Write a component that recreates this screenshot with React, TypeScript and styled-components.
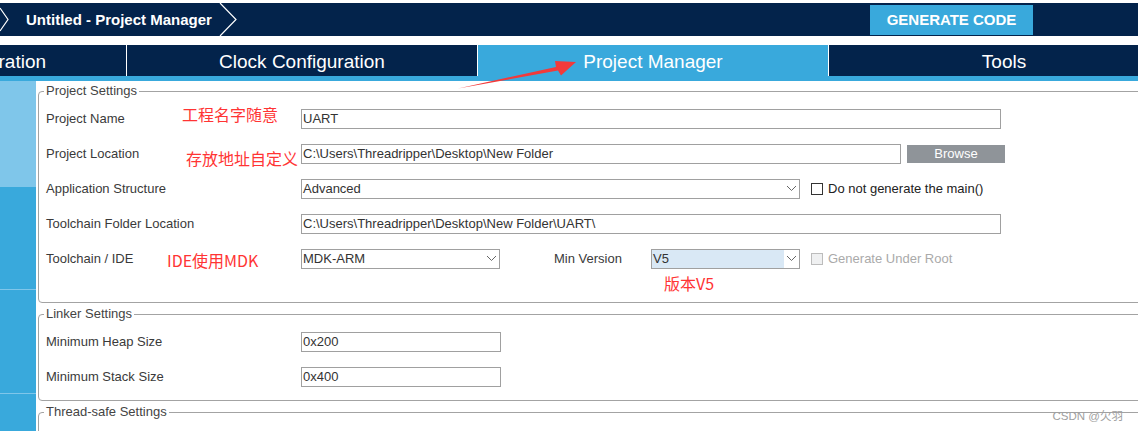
import * as React from "react";
import styled, { createGlobalStyle } from "styled-components";

const GlobalStyle = createGlobalStyle`
  body {
    margin: 0;
    background: #fff;
    overflow: hidden;
    font-family: "Liberation Sans", Arial, sans-serif;
  }
`;

const NAVY = "#03234b";
const BLUE = "#39a9dc";
const PALE = "#7fc6ea";

const Page = styled.div`
  position: relative;
  width: 1138px;
  height: 431px;
  padding-top: 3px;
  box-sizing: border-box;
  overflow: hidden;
  background: #fff;
`;

const TopBar = styled.div`
  height: 33px;
  background: ${NAVY};
  display: flex;
  align-items: center;
`;

const Crumb = styled.div`
  display: flex;
  align-items: center;
  height: 100%;
  color: #fff;
  font-weight: bold;
  font-size: 15px;
`;

const CrumbText = styled.span`
  padding: 0 7px 0 17px;
`;

const GenerateButton = styled.div`
  margin-left: auto;
  margin-right: 105px;
  width: 163px;
  height: 30px;
  background: ${BLUE};
  color: #fff;
  font-weight: bold;
  font-size: 15px;
  display: flex;
  align-items: center;
  justify-content: center;
`;

const TabRow = styled.div`
  margin-top: 9px;
  margin-left: -224px;
  height: 31px;
  display: flex;
  gap: 1px;
  background: #fff;
`;

const Tab = styled.div<{ $active?: boolean }>`
  flex: 0 0 350px;
  padding-top: 2px;
  box-sizing: border-box;
  background: ${(p) => (p.$active ? BLUE : NAVY)};
  color: #fff;
  font-size: 19px;
  display: flex;
  align-items: center;
  justify-content: center;
`;

const Strip = styled.div`
  height: 5px;
  background: ${BLUE};
`;

const Body = styled.div`
  display: flex;
`;

const Sidebar = styled.div`
  flex: 0 0 36px;
  display: flex;
  flex-direction: column;
  gap: 1px;
  background: ${PALE};
`;

const SideBlock = styled.div<{ $light?: boolean; $h: number }>`
  height: ${(p) => p.$h}px;
  background: ${(p) => (p.$light ? PALE : BLUE)};
`;

const Main = styled.div`
  flex: 1;
  padding: 3px 0 0 2px;
  overflow: hidden;
`;

const Group = styled.fieldset<{ $pb: number }>`
  margin: 0 -30px 4px 0;
  padding: 3px 0 ${(p) => p.$pb}px 7px;
  border: 1px solid #a3a3a3;
  border-radius: 4px;
  min-width: 0;
`;

const Legend = styled.legend`
  margin-left: -2px;
  padding: 0 2px;
  font-size: 13px;
  line-height: 14px;
  color: #444;
`;

const Row = styled.div`
  height: 35px;
  display: flex;
  align-items: center;
`;

const LabelCell = styled.div`
  position: relative;
  flex: 0 0 255px;
  font-size: 13px;
  color: #3a3a3a;
`;

const Note = styled.span<{ $x: number; $dy: number }>`
  position: absolute;
  left: ${(p) => p.$x}px;
  top: 50%;
  transform: translateY(calc(-50% + ${(p) => p.$dy}px));
  white-space: nowrap;
  color: #ff3434;
  font-size: 16px;
  font-family: "Noto Sans CJK SC", "Liberation Sans", sans-serif;
`;

const Box = styled.div<{ $w: number }>`
  box-sizing: border-box;
  width: ${(p) => p.$w}px;
  height: 20px;
  border: 1px solid #a0a0a0;
  background: #fff;
  display: flex;
  align-items: stretch;
  font-size: 13px;
  color: #333;
`;

const BoxText = styled.div<{ $tint?: boolean }>`
  flex: 1;
  padding-left: 1px;
  display: flex;
  align-items: center;
  white-space: nowrap;
  overflow: hidden;
  background: ${(p) => (p.$tint ? "#d9e8f5" : "transparent")};
`;

const Chevron = styled.div`
  flex: 0 0 15px;
  display: flex;
  align-items: center;
  justify-content: center;
  background: #fff;
`;

const Browse = styled.div`
  margin-left: 6px;
  width: 98px;
  height: 18px;
  background: #8f9499;
  color: #fff;
  font-size: 13px;
  display: flex;
  align-items: center;
  justify-content: center;
`;

const Check = styled.label<{ $disabled?: boolean }>`
  margin-left: 11px;
  display: flex;
  align-items: center;
  gap: 5px;
  font-size: 13px;
  color: ${(p) => (p.$disabled ? "#aaa" : "#222")};
`;

const CheckBox = styled.span<{ $disabled?: boolean }>`
  box-sizing: border-box;
  width: 12px;
  height: 12px;
  border: 1px solid ${(p) => (p.$disabled ? "#bcbcbc" : "#333")};
  background: ${(p) => (p.$disabled ? "#eff0f1" : "#fff")};
`;

const SubLabel = styled.span`
  flex: 0 0 97px;
  margin-left: 54px;
  font-size: 13px;
  color: #3a3a3a;
`;

const NoteRow = styled.div`
  height: 18px;
  padding-left: 618px;
  margin-top: -2px;
  color: #ff3434;
  font-size: 16px;
  font-family: "Noto Sans CJK SC", "Liberation Sans", sans-serif;
  line-height: 18px;
`;

const Watermark = styled.div`
  position: absolute;
  right: 15px;
  bottom: 8px;
  font-size: 11.5px;
  color: #a0a0a0;
  font-family: "Liberation Sans", "Noto Sans CJK SC", sans-serif;
`;

const Overlay = styled.svg`
  position: absolute;
  left: 0;
  top: 0;
  pointer-events: none;
`;

const Down = () => (
  <svg width="11" height="7" viewBox="0 0 11 7">
    <polyline points="1,1 5.5,5.5 10,1" fill="none" stroke="#666" strokeWidth="1" />
  </svg>
);

const Select: React.FC<{ w: number; value: string; tint?: boolean }> = ({ w, value, tint }) => (
  <Box $w={w}>
    <BoxText $tint={tint}>{value}</BoxText>
    <Chevron>
      <Down />
    </Chevron>
  </Box>
);

const Field: React.FC<{ w: number; value: string }> = ({ w, value }) => (
  <Box $w={w}>
    <BoxText>{value}</BoxText>
  </Box>
);

const sideBlocks = [105, 102, 103, 40];

export default function App() {
  return (
    <Page>
      <GlobalStyle />
      <TopBar>
        <Crumb>
          <svg width="9" height="33" viewBox="0 0 9 33">
            <polyline points="0,5 8,16.5 0,28" fill="none" stroke="#fff" strokeWidth="1.2" />
          </svg>
          <CrumbText>Untitled - Project Manager</CrumbText>
          <svg width="20" height="33" viewBox="0 0 20 33">
            <polyline points="1,0 17,16.5 1,33" fill="none" stroke="#fff" strokeWidth="1.2" />
          </svg>
        </Crumb>
        <GenerateButton>GENERATE CODE</GenerateButton>
      </TopBar>

      <TabRow>
        <Tab>Pinout &amp; Configuration</Tab>
        <Tab>Clock Configuration</Tab>
        <Tab $active>Project Manager</Tab>
        <Tab>Tools</Tab>
      </TabRow>
      <Strip />

      <Body>
        <Sidebar>
          {sideBlocks.map((h, i) => (
            <SideBlock key={i} $h={h} $light={i === 0} />
          ))}
        </Sidebar>
        <Main>
          <Group $pb={10}>
            <Legend>Project Settings</Legend>
            <Row>
              <LabelCell>
                Project Name
                <Note $x={136} $dy={-5}>工程名字随意</Note>
              </LabelCell>
              <Field w={700} value="UART" />
            </Row>
            <Row>
              <LabelCell>
                Project Location
                <Note $x={140} $dy={4}>存放地址自定义</Note>
              </LabelCell>
              <Field w={600} value="C:\Users\Threadripper\Desktop\New Folder" />
              <Browse>Browse</Browse>
            </Row>
            <Row>
              <LabelCell>Application Structure</LabelCell>
              <Select w={499} value="Advanced" />
              <Check>
                <CheckBox />
                Do not generate the main()
              </Check>
            </Row>
            <Row>
              <LabelCell>Toolchain Folder Location</LabelCell>
              <Field w={700} value="C:\Users\Threadripper\Desktop\New Folder\UART\" />
            </Row>
            <Row>
              <LabelCell>
                Toolchain / IDE
                <Note $x={121} $dy={1}>IDE使用MDK</Note>
              </LabelCell>
              <Select w={199} value="MDK-ARM" />
              <SubLabel>Min Version</SubLabel>
              <Select w={149} value="V5" tint />
              <Check $disabled>
                <CheckBox $disabled />
                Generate Under Root
              </Check>
            </Row>
            <NoteRow>版本V5</NoteRow>
          </Group>

          <Group $pb={6}>
            <Legend>Linker Settings</Legend>
            <Row>
              <LabelCell>Minimum Heap Size</LabelCell>
              <Field w={200} value="0x200" />
            </Row>
            <Row>
              <LabelCell>Minimum Stack Size</LabelCell>
              <Field w={200} value="0x400" />
            </Row>
          </Group>

          <Group $pb={40}>
            <Legend>Thread-safe Settings</Legend>
          </Group>
        </Main>
      </Body>

      <Overlay width="1138" height="431" viewBox="0 0 1138 431">
        <polygon
          points="458,88.5 556,67 555,61 576,62 561,75.5 558,70.5"
          fill="#f23a3a"
        />
      </Overlay>
      <Watermark>CSDN @欠羽</Watermark>
    </Page>
  );
}
